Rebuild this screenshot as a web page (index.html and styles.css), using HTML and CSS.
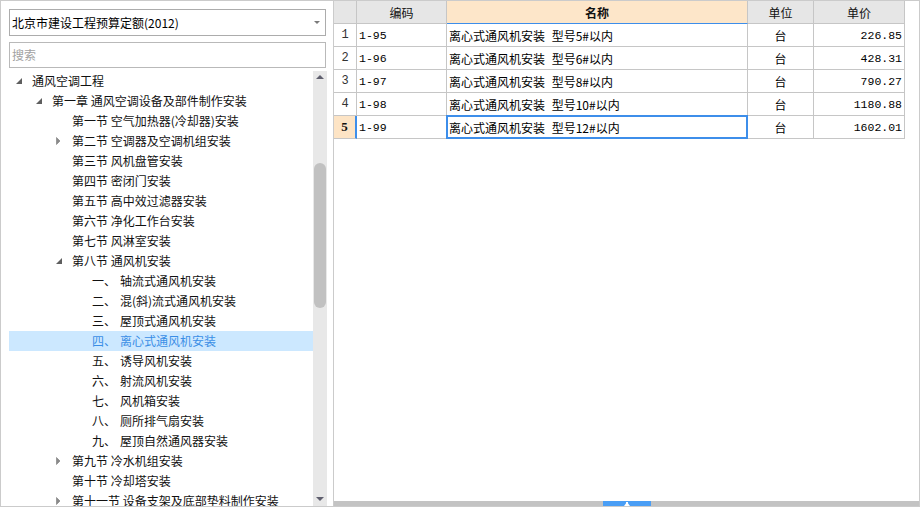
FILE: index.html
```html
<!DOCTYPE html>
<html lang="zh-CN">
<head>
<meta charset="utf-8">
<title>定额库</title>
<link rel="stylesheet" href="styles.css">
</head>
<body>
<div class="app">
  <aside class="left">
    <div class="combo">
      <span class="combo-text">北京市建设工程预算定额(2012)</span>
      <svg class="caret" width="6" height="4" viewBox="0 0 6 4"><polygon points="0,0 6,0 3,3" fill="#7a7a7a"/></svg>
    </div>
    <div class="search">搜索</div>
    <div class="treewrap">
      <ul class="tree">
        <li class="l0"><span class="tg"><svg width="8" height="8" viewBox="0 0 8 8"><polygon points="6,1 6,7 0,7" fill="#5e5e5e"/></svg></span><span>通风空调工程</span></li>
        <li class="l1"><span class="tg"><svg width="8" height="8" viewBox="0 0 8 8"><polygon points="6,1 6,7 0,7" fill="#5e5e5e"/></svg></span><span>第一章 通风空调设备及部件制作安装</span></li>
        <li class="l2"><span class="tg"></span><span>第一节 空气加热器(冷却器)安装</span></li>
        <li class="l2"><span class="tg"><svg width="8" height="8" viewBox="0 0 8 8"><polygon points="0.5,0.5 4,4 0.5,7.5" fill="#8a8a8a" stroke="#7a7a7a" stroke-width="0.6"/></svg></span><span>第二节 空调器及空调机组安装</span></li>
        <li class="l2"><span class="tg"></span><span>第三节 风机盘管安装</span></li>
        <li class="l2"><span class="tg"></span><span>第四节 密闭门安装</span></li>
        <li class="l2"><span class="tg"></span><span>第五节 高中效过滤器安装</span></li>
        <li class="l2"><span class="tg"></span><span>第六节 净化工作台安装</span></li>
        <li class="l2"><span class="tg"></span><span>第七节 风淋室安装</span></li>
        <li class="l2"><span class="tg"><svg width="8" height="8" viewBox="0 0 8 8"><polygon points="6,1 6,7 0,7" fill="#5e5e5e"/></svg></span><span>第八节 通风机安装</span></li>
        <li class="l3"><span class="tg"></span><span class="num">一、</span><span>轴流式通风机安装</span></li>
        <li class="l3"><span class="tg"></span><span class="num">二、</span><span>混(斜)流式通风机安装</span></li>
        <li class="l3"><span class="tg"></span><span class="num">三、</span><span>屋顶式通风机安装</span></li>
        <li class="l3 sel"><span class="tg"></span><span class="num">四、</span><span>离心式通风机安装</span></li>
        <li class="l3"><span class="tg"></span><span class="num">五、</span><span>诱导风机安装</span></li>
        <li class="l3"><span class="tg"></span><span class="num">六、</span><span>射流风机安装</span></li>
        <li class="l3"><span class="tg"></span><span class="num">七、</span><span>风机箱安装</span></li>
        <li class="l3"><span class="tg"></span><span class="num">八、</span><span>厕所排气扇安装</span></li>
        <li class="l3"><span class="tg"></span><span class="num">九、</span><span>屋顶自然通风器安装</span></li>
        <li class="l2"><span class="tg"><svg width="8" height="8" viewBox="0 0 8 8"><polygon points="0.5,0.5 4,4 0.5,7.5" fill="#8a8a8a" stroke="#7a7a7a" stroke-width="0.6"/></svg></span><span>第九节 冷水机组安装</span></li>
        <li class="l2"><span class="tg"></span><span>第十节 冷却塔安装</span></li>
        <li class="l2"><span class="tg"><svg width="8" height="8" viewBox="0 0 8 8"><polygon points="0.5,0.5 4,4 0.5,7.5" fill="#8a8a8a" stroke="#7a7a7a" stroke-width="0.6"/></svg></span><span>第十一节 设备支架及底部垫料制作安装</span></li>
      </ul>
      <div class="vscroll">
        <div class="sb-btn"><svg width="8" height="4" viewBox="0 0 8 4"><polygon points="0,4 8,4 4,0" fill="#5f5f6e"/></svg></div>
        <div class="thumb"></div>
        <div class="sb-btn sb-down"><svg width="8" height="4" viewBox="0 0 8 4"><polygon points="0,0 8,0 4,4" fill="#5f5f6e"/></svg></div>
      </div>
    </div>
  </aside>
  <main class="right">
    <div class="gridarea">
      <div class="grid">
        <div class="hd"></div>
        <div class="hd">编码</div>
        <div class="hd hd-active">名称</div>
        <div class="hd">单位</div>
        <div class="hd">单价</div>

        <div class="c rn">1</div>
        <div class="c code">1-95</div>
        <div class="c name">离心式通风机安装 型号5#以内</div>
        <div class="c unit">台</div>
        <div class="c price">226.85</div>

        <div class="c rn">2</div>
        <div class="c code">1-96</div>
        <div class="c name">离心式通风机安装 型号6#以内</div>
        <div class="c unit">台</div>
        <div class="c price">428.31</div>

        <div class="c rn">3</div>
        <div class="c code">1-97</div>
        <div class="c name">离心式通风机安装 型号8#以内</div>
        <div class="c unit">台</div>
        <div class="c price">790.27</div>

        <div class="c rn">4</div>
        <div class="c code">1-98</div>
        <div class="c name">离心式通风机安装 型号10#以内</div>
        <div class="c unit">台</div>
        <div class="c price">1180.88</div>

        <div class="c rn rn-cur">5</div>
        <div class="c code">1-99</div>
        <div class="c name name-cur">离心式通风机安装 型号12#以内</div>
        <div class="c unit">台</div>
        <div class="c price">1602.01</div>
      </div>
    </div>
    <div class="hbar">
      <div class="htab"><svg width="8" height="5" viewBox="0 0 8 5"><polygon points="1,5 7,5 4,1" fill="#ffffff"/><rect x="3" y="1" width="2" height="4" fill="#ffffff"/></svg></div>
    </div>
  </main>
</div>
</body>
</html>
```

FILE: styles.css
```css
html, body {
  margin: 0;
  padding: 0;
  background: #ffffff;
}

body {
  width: 920px;
  height: 507px;
  overflow: hidden;
  font-family: "Noto Sans CJK SC", "Microsoft YaHei", sans-serif;
  font-size: 12px;
  color: #111111;
}

.app {
  width: 920px;
  height: 507px;
  box-sizing: border-box;
  border: 1px solid #cbcbcb;
  display: flex;
}

/* ---------- left panel ---------- */
.left {
  width: 333px;
  flex: none;
  box-sizing: border-box;
  border-right: 1px solid #cbcbcb;
  padding: 8px 6px 0 8px;
  display: flex;
  flex-direction: column;
  min-height: 0;
}

.combo {
  height: 27px;
  box-sizing: border-box;
  border: 1px solid #acacac;
  margin-right: 1px;
  display: flex;
  align-items: center;
  padding-left: 2px;
  padding-right: 5px;
  color: #000000;
  font-size: 12px;
}

.combo-text {
  flex: 1;
  white-space: nowrap;
}

.caret {
  display: block;
  margin-top: 1px;
}

.search {
  margin-top: 6px;
  margin-right: 1px;
  height: 26px;
  box-sizing: border-box;
  border: 1px solid #b9b9b9;
  padding-left: 2px;
  line-height: 24px;
  color: #a2a2a2;
  font-size: 12px;
}

.treewrap {
  margin-top: 3px;
  flex: 1;
  min-height: 0;
  display: flex;
  overflow: hidden;
}

.tree {
  flex: 1;
  margin: 0;
  padding: 0;
  list-style: none;
  overflow: hidden;
}

.tree li {
  height: 20px;
  line-height: 20px;
  display: flex;
  align-items: center;
  white-space: nowrap;
  color: #111111;
  font-size: 12px;
}

.tree li.l0 { padding-left: 3px; }
.tree li.l1 { padding-left: 23px; }
.tree li.l2 { padding-left: 43px; }
.tree li.l3 { padding-left: 63px; }

.tg {
  width: 20px;
  height: 20px;
  flex: none;
  display: flex;
  align-items: center;
  padding-left: 4px;
  box-sizing: border-box;
}

.tg svg {
  display: block;
}

.num {
  width: 28px;
  flex: none;
}

.tree li.sel {
  background: #cce8ff;
  color: #3a8ee6;
}

.vscroll {
  width: 14px;
  flex: none;
  background: #e8e8e8;
  display: flex;
  flex-direction: column;
  align-items: center;
}

.sb-btn {
  height: 12px;
  width: 14px;
  display: flex;
  align-items: center;
  justify-content: center;
  flex: none;
}

.sb-btn svg {
  display: block;
}

.thumb {
  margin-top: 80px;
  width: 12px;
  height: 145px;
  border-radius: 6px;
  background: #c1c1c1;
  flex: none;
}

.sb-down {
  margin-top: auto;
  margin-bottom: 1px;
}

/* ---------- right panel ---------- */
.right {
  flex: 1;
  min-width: 0;
  display: flex;
  flex-direction: column;
}

.gridarea {
  flex: 1;
  min-height: 0;
}

.grid {
  display: grid;
  grid-template-columns: 23px 90px 301px 66px 91px;
  grid-auto-rows: 23px;
  width: 571px;
}

.hd, .c {
  box-sizing: border-box;
  border-right: 1px solid #c6c6c6;
  border-bottom: 1px solid #c6c6c6;
  white-space: nowrap;
  overflow: visible;
  display: flex;
  align-items: center;
}

.hd {
  background: #e6e6e6;
  justify-content: center;
  font-size: 12px;
  color: #111111;
}

.hd-active {
  background: #fde6c9;
  border-bottom-color: #3d8eea;
  font-weight: bold;
}

.c {
  background: #ffffff;
  color: #000000;
}

.rn {
  justify-content: center;
  font-family: "Liberation Mono", "DejaVu Sans Mono", monospace;
  font-size: 12px;
  color: #333333;
}

.rn-cur {
  background: #fde4c5;
  border-right: 2px solid #3d8eea;
  font-weight: bold;
  color: #111111;
  font-family: "Liberation Serif", serif;
  font-size: 13px;
}

.code {
  padding-left: 2px;
  font-family: "Liberation Mono", "DejaVu Sans Mono", monospace;
  font-size: 11.5px;
}

.name {
  padding-left: 2px;
  font-size: 12px;
  word-spacing: 4px;
}

.name-cur {
  position: relative;
}

.name-cur::after {
  content: "";
  position: absolute;
  top: -1px;
  left: -1px;
  right: -1px;
  bottom: -1px;
  border: 2px solid #3d8eea;
  pointer-events: none;
}

.unit {
  justify-content: center;
  font-size: 12px;
}

.price {
  justify-content: flex-end;
  padding-right: 2px;
  font-family: "Liberation Mono", "DejaVu Sans Mono", monospace;
  font-size: 11.5px;
}

.hbar {
  height: 5px;
  flex: none;
  background: #c3c3c3;
  display: flex;
  justify-content: center;
}

.htab {
  width: 48px;
  height: 5px;
  background: #4a9ef5;
  display: flex;
  align-items: center;
  justify-content: center;
}

.htab svg {
  display: block;
}
```
